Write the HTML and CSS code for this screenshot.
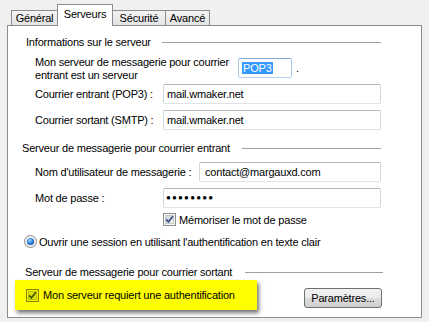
FILE: index.html
```html
<!DOCTYPE html>
<html>
<head>
<meta charset="utf-8">
<title>Propriétés du compte - Serveurs</title>
<link rel="stylesheet" href="styles.css">
</head>
<body>

<div class="tabs">
	<div class="tab tabGeneral">Général</div>
	<div class="tab tabActif">Serveurs</div>
	<div class="tab tabSecurite">Sécurité</div>
	<div class="tab tabAvance">Avancé</div>
</div>

<div class="panneau">

	<div class="titre titre1">
		<span>Informations sur le serveur</span>
		<div class="trait trait1"></div>
	</div>

	<div class="ligne ligneMon">
		<div class="label labelMon">Mon serveur de messagerie pour courrier<br>entrant est un serveur</div>
		<div class="champ champPop"><span class="selection">POP3</span></div>
		<div class="point">.</div>
	</div>

	<div class="ligne ligneEntrant">
		<div class="label labelCourt">Courrier entrant (POP3) :</div>
		<div class="champ champLarge">mail.wmaker.net</div>
	</div>

	<div class="ligne ligneSortant">
		<div class="label labelCourt">Courrier sortant (SMTP) :</div>
		<div class="champ champLarge">mail.wmaker.net</div>
	</div>

	<div class="titre titre2">
		<span>Serveur de messagerie pour courrier entrant</span>
		<div class="trait trait2"></div>
	</div>

	<div class="ligne ligneNom">
		<div class="label labelNom">Nom d'utilisateur de messagerie :</div>
		<div class="champ champNom">contact@margauxd.com</div>
	</div>

	<div class="ligne ligneMdp">
		<div class="label labelCourt">Mot de passe :</div>
		<div class="champ champLarge champMdp">&#9679;&#9679;&#9679;&#9679;&#9679;&#9679;&#9679;&#9679;</div>
	</div>

	<div class="option optionMemo">
		<svg class="case" width="13" height="13" viewBox="0 0 13 13">
			<defs>
				<linearGradient id="fondCase" x1="0" y1="0" x2="1" y2="1">
					<stop offset="0" stop-color="#cfd1d4"/>
					<stop offset="1" stop-color="#fbfbfb"/>
				</linearGradient>
			</defs>
			<rect x="0.5" y="0.5" width="12" height="12" fill="#f6f6f6" stroke="#8e8f8f"/>
			<rect x="2.5" y="2.5" width="8" height="8" fill="url(#fondCase)" stroke="#c4c6c9"/>
			<path d="M3.2 6.4 L5.4 8.9 L9.9 3.2" fill="none" stroke="#3d4f86" stroke-width="1.7"/>
		</svg>
		<span>Mémoriser le mot de passe</span>
	</div>

	<div class="option optionRadio">
		<svg class="radio" width="13" height="13" viewBox="0 0 13 13">
			<defs>
				<radialGradient id="pointRadio" cx="0.4" cy="0.35" r="0.7">
					<stop offset="0" stop-color="#9fd7ff"/>
					<stop offset="0.6" stop-color="#2d7fd8"/>
					<stop offset="1" stop-color="#1a4f9c"/>
				</radialGradient>
			</defs>
			<circle cx="6.5" cy="6.5" r="6" fill="#eeeeee" stroke="#8e8f8f"/>
			<circle cx="6.5" cy="6.5" r="3.6" fill="url(#pointRadio)"/>
		</svg>
		<span>Ouvrir une session en utilisant l'authentification en texte clair</span>
	</div>

	<div class="titre titre3">
		<span>Serveur de messagerie pour courrier sortant</span>
		<div class="trait trait3"></div>
	</div>

	<div class="ligne ligneAuth">
		<div class="surligne">
			<svg class="case" width="13" height="13" viewBox="0 0 13 13">
				<rect x="0.5" y="0.5" width="12" height="12" fill="#f2f200" stroke="#8a8a00"/>
				<rect x="2.5" y="2.5" width="8" height="8" fill="#e0e000" stroke="#c2c200"/>
				<path d="M3.2 6.4 L5.4 8.9 L9.9 3.2" fill="none" stroke="#3f5a00" stroke-width="1.7"/>
			</svg>
			<span>Mon serveur requiert une authentification</span>
		</div>
		<div class="bouton">Paramètres...</div>
	</div>

</div>

</body>
</html>
```

FILE: styles.css
```css
   body {
		margin: 0;
		background-color: #f0f0f0;
		font-family: "Liberation Sans", Arial, sans-serif;
		font-size: 11px;
		letter-spacing: -0.2px;
		color: #000;
		width: 429px;
		height: 322px;
		overflow: hidden;
   }

   /* onglets */
   .tabs {
		display: flex;
		align-items: flex-end;
		height: 25px;
		padding-left: 11px;
   }

   .tab {
		box-sizing: border-box;
		height: 15px;
		line-height: 14px;
		text-align: center;
		border: 1px solid #898c95;
		border-bottom: none;
		background: linear-gradient(#f3f3f3, #e3e3e3);
		margin-right: -1px;
   }

   .tabGeneral { width: 47px; }
   .tabSecurite { width: 54px; }
   .tabAvance { width: 45px; }

   .tabActif {
		position: relative;
		width: 56px;
		height: 22px;
		line-height: 18px;
		margin-bottom: -1px;
		background: #fff;
		z-index: 1;
   }

   /* panneau */
   .panneau {
		box-sizing: border-box;
		margin-left: 7px;
		width: 415px;
		height: 293px;
		border: 1px solid #898c95;
		background-color: #fff;
		overflow: hidden;
   }

   .titre {
		display: flex;
		align-items: center;
		height: 14px;
		white-space: nowrap;
   }

   .trait {
		flex: 1;
		height: 0;
		border-top: 1px solid #a0a0a0;
		margin-left: 11px;
   }

   .titre1 { margin-top: 9px; padding-left: 18px; }
   .trait1 { margin-right: 40px; }

   .titre2 { margin-top: 11px; padding-left: 14px; }
   .trait2 { margin-right: 40px; margin-left: 12px; }

   .titre3 { margin-top: 17px; padding-left: 17px; }
   .trait3 { margin-right: 38px; margin-left: 13px; }

   .ligne {
		display: flex;
		align-items: center;
		padding-left: 27px;
		white-space: nowrap;
   }

   .label { flex-shrink: 0; }
   .labelCourt { width: 128px; }
   .labelNom { width: 164px; }

   .ligneMon {
		margin-top: 7px;
		align-items: flex-start;
   }

   .labelMon {
		width: 203px;
		line-height: 13px;
   }

   .champ {
		box-sizing: border-box;
		height: 20px;
		line-height: 18px;
		padding-left: 3px;
		border: 1px solid;
		border-color: #b3b6bc #d3d6db #dfe3e8 #d3d6db;
		border-radius: 2px;
		background: #fff;
   }

   .champPop {
		width: 54px;
		margin-top: 2px;
		border-color: #7faad8 #a9c9ea #b8d3ef #a9c9ea;
   }

   .selection {
		display: inline-block;
		background-color: #3399ff;
		color: #fff;
		line-height: 12px;
		padding: 0 1px;
   }

   .point {
		margin-top: 6px;
		margin-left: 4px;
   }

   .champLarge { width: 218px; }
   .champNom { width: 182px; padding-left: 5px; }

   .champMdp {
		font-size: 8px;
		letter-spacing: 1.2px;
		padding-left: 2px;
   }

   .ligneEntrant { margin-top: 2px; }
   .ligneSortant { margin-top: 6px; }
   .ligneNom { margin-top: 7px; }
   .ligneMdp { margin-top: 6px; }

   .option {
		display: flex;
		align-items: center;
		height: 13px;
		white-space: nowrap;
   }

   .optionMemo {
		margin-top: 5px;
		padding-left: 155px;
   }

   .optionRadio {
		margin-top: 9px;
		padding-left: 16px;
   }

   .case, .radio {
		flex-shrink: 0;
		margin-right: 3px;
   }

   .radio { margin-right: 2px; }

   .ligneAuth {
		margin-top: 1px;
		padding-left: 7px;
		align-items: flex-start;
   }

   .surligne {
		display: flex;
		align-items: center;
		width: 242px;
		height: 30px;
		padding-left: 11px;
		box-sizing: border-box;
		background-color: #ffff00;
		box-shadow: 2px 3px 4px rgba(0, 0, 0, 0.55);
   }

   .surligne .case { margin-right: 4px; }

   .bouton {
		box-sizing: border-box;
		width: 78px;
		height: 20px;
		line-height: 18px;
		margin-top: 8px;
		margin-left: 47px;
		text-align: center;
		border: 1px solid #707070;
		border-radius: 3px;
		background: linear-gradient(#f2f2f2 0%, #ebebeb 50%, #dddddd 51%, #cfcfcf 100%);
   }
```
